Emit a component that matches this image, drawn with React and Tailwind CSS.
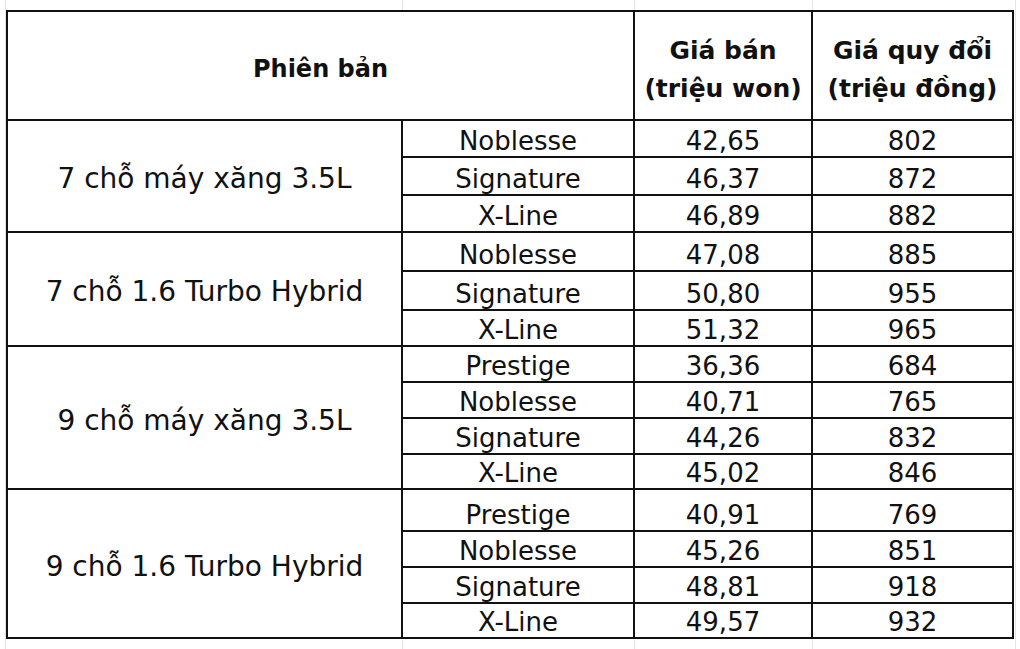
import React from 'react';

const groups = [
	{
		label: '7 chỗ máy xăng 3.5L',
		rows: [
			{ name: 'Noblesse', won: '42,65', vnd: '802', h: 'h-[37px]' },
			{ name: 'Signature', won: '46,37', vnd: '872', h: 'h-[38px]' },
			{ name: 'X-Line', won: '46,89', vnd: '882', h: 'h-[35px]' },
		],
	},
	{
		label: '7 chỗ 1.6 Turbo Hybrid',
		rows: [
			{ name: 'Noblesse', won: '47,08', vnd: '885', h: 'h-[39px]' },
			{ name: 'Signature', won: '50,80', vnd: '955', h: 'h-[39px]' },
			{ name: 'X-Line', won: '51,32', vnd: '965', h: 'h-[34px]' },
		],
	},
	{
		label: '9 chỗ máy xăng 3.5L',
		rows: [
			{ name: 'Prestige', won: '36,36', vnd: '684', h: 'h-[36px]' },
			{ name: 'Noblesse', won: '40,71', vnd: '765', h: 'h-[36px]' },
			{ name: 'Signature', won: '44,26', vnd: '832', h: 'h-[36px]' },
			{ name: 'X-Line', won: '45,02', vnd: '846', h: 'h-[33px]' },
		],
	},
	{
		label: '9 chỗ 1.6 Turbo Hybrid',
		rows: [
			{ name: 'Prestige', won: '40,91', vnd: '769', h: 'h-[42px]' },
			{ name: 'Noblesse', won: '45,26', vnd: '851', h: 'h-[36px]' },
			{ name: 'Signature', won: '48,81', vnd: '918', h: 'h-[36px]' },
			{ name: 'X-Line', won: '49,57', vnd: '932', h: 'h-[33px]' },
		],
	},
];

const Cell = ({ className = '', children }) => (
	<div className={`flex items-end justify-center text-[26px] leading-[30px] ${className}`}>{children}</div>
);

const App = () => (
	<div className="w-[1020px] h-[649px] pl-[6px] pt-[10px] bg-white bg-[linear-gradient(90deg,transparent_5px,#e4e4e4_5px,#e4e4e4_6px,transparent_6px,transparent_402px,#e4e4e4_402px,#e4e4e4_403px,transparent_403px,transparent_634px,#e4e4e4_634px,#e4e4e4_635px,transparent_635px,transparent_812px,#e4e4e4_812px,#e4e4e4_813px,transparent_813px,transparent_1015px,#e4e4e4_1015px,#e4e4e4_1016px,transparent_1016px)] font-['DejaVu_Sans',sans-serif] text-[#111]">
		<div className="w-[1008px] border-2 border-[#111] bg-white">
			{/* header */}
			<div className="flex h-[109px] border-b-2 border-[#111]">
				<div className="w-[627px] border-r-2 border-[#111] flex items-center justify-center pt-[6px] text-[24px] font-bold">
					Phiên bản
				</div>
				<div className="w-[178px] border-r-2 border-[#111] flex flex-col items-center justify-center pt-[8px] text-[25px] leading-[38px] font-bold">
					<span>Giá bán</span>
					<span>(triệu won)</span>
				</div>
				<div className="flex-1 flex flex-col items-center justify-center pt-[8px] text-[25px] leading-[38px] font-bold">
					<span>Giá quy đổi</span>
					<span>(triệu đồng)</span>
				</div>
			</div>

			{groups.map((g, gi) => (
				<div key={g.label} className={`flex ${gi < groups.length - 1 ? 'border-b-2 border-[#111]' : ''}`}>
					<div className="w-[395px] border-r-2 border-[#111] flex items-center justify-center pt-[6px] text-[28px]">
						{g.label}
					</div>
					<div className="flex-1 flex flex-col">
						{g.rows.map((r, ri) => (
							<div
								key={r.name}
								className={`flex ${r.h} ${ri < g.rows.length - 1 ? 'border-b-2 border-[#111]' : ''}`}
							>
								<Cell className="w-[232px] border-r-2 border-[#111]">{r.name}</Cell>
								<Cell className="w-[178px] border-r-2 border-[#111]">{r.won}</Cell>
								<Cell className="flex-1">{r.vnd}</Cell>
							</div>
						))}
					</div>
				</div>
			))}
		</div>
	</div>
);

export default App;
